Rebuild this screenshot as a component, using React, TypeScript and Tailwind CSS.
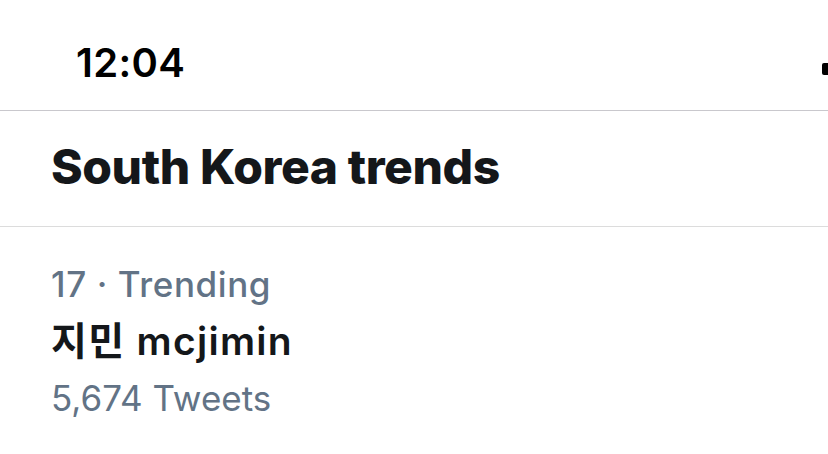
import React from "react";

const trend = {
  rank: 17,
  label: "Trending",
  name: "지민 mcjimin",
  count: "5,674 Tweets",
};

export default function App() {
  return (
    <div className="w-[828px] h-[454px] bg-white overflow-hidden font-['Inter','Noto_Sans_CJK_KR',sans-serif]">
      {/* status bar */}
      <div className="relative h-[111px] border-b border-[#c9c8cd] flex items-center pl-[76px] pt-[16px]">
        <span className="text-[40px] font-semibold tracking-[0.3px] text-black">12:04</span>
        <div className="absolute right-0 top-[63px] w-[6px] h-[12px] bg-black rounded-l-[2px]" />
      </div>

      {/* header */}
      <div className="h-[116px] border-b border-[#dcdcdc] flex items-center pl-[51px] pb-[4px]">
        <h1 className="text-[48px] font-extrabold tracking-[-0.4px] text-[#14171a]">South Korea trends</h1>
      </div>

      {/* trend item */}
      <div className="pl-[51px] pt-[36px] flex flex-col">
        <span className="text-[35px] leading-[42px] font-medium tracking-[0.6px] text-[#627386]">
          {trend.rank} · {trend.label}
        </span>
        <span className="mt-[13px] text-[39px] leading-[46px] font-semibold tracking-[1.3px] text-[#14171a]">
          {trend.name}
        </span>
        <span className="mt-[13px] text-[35px] leading-[42px] text-[#627386]">{trend.count}</span>
      </div>
    </div>
  );
}
